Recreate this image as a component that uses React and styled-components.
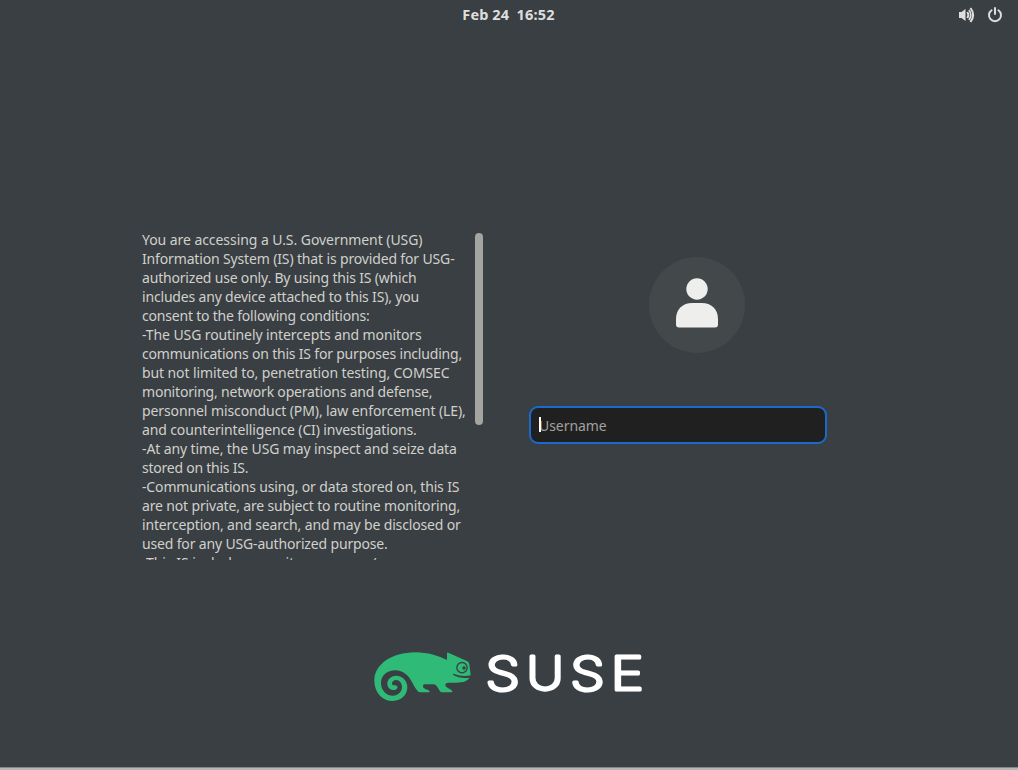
import React from "react";
import styled, { createGlobalStyle } from "styled-components";

const GlobalStyle = createGlobalStyle`
  * { box-sizing: border-box; }
  body {
    margin: 0;
    background: #3a3f43;
    font-family: "Noto Sans", sans-serif;
  }
`;

const Screen = styled.div`
  width: 1018px;
  height: 770px;
  display: flex;
  flex-direction: column;
  overflow: hidden;
  background: #3a3f43;
`;

const TopBar = styled.header`
  display: grid;
  grid-template-columns: 1fr auto 1fr;
  align-items: center;
  height: 30px;
  padding: 0 15px 0 14px;
`;

const Clock = styled.time`
  grid-column: 2;
  padding-bottom: 2px;
  color: #dededc;
  font-size: 14.5px;
  font-weight: 700;
  line-height: 28px;
  letter-spacing: 0.2px;
  word-spacing: -0.4px;
  white-space: pre;
`;

const Tray = styled.div`
  display: flex;
  justify-content: flex-end;
  gap: 12px;
  svg { display: block; }
`;

const Main = styled.main`
  display: flex;
  align-items: flex-start;
  height: 330px;
  margin-top: 200px;
  padding-left: 142px;
`;

const Banner = styled.section`
  display: flex;
  width: 341px;
  height: 330px;
  overflow: hidden;
`;

const Notice = styled.div`
  width: 333px;
  color: #d0d0cc;
  font-size: 14px;
`;

const Line = styled.div`
  height: 19px;
  line-height: 19px;
  white-space: nowrap;
  letter-spacing: ${(p) => p.$track}px;
`;

const ScrollThumb = styled.div`
  width: 8px;
  height: 192px;
  margin-top: 3px;
  border-radius: 4px;
  background: #a4a4a1;
`;

const Login = styled.section`
  display: flex;
  flex-direction: column;
  width: 298px;
  margin-left: 46px;
  padding-top: 27px;
`;

const Avatar = styled.div`
  width: 96px;
  height: 96px;
  margin-left: 120px;
  border-radius: 50%;
  background: #43484b;
  svg { display: block; }
`;

const Entry = styled.div`
  display: flex;
  align-items: center;
  height: 38px;
  margin-top: 53px;
  padding-left: 8px;
  border: 2px solid #1b6acb;
  border-radius: 9px;
  background: #202020;
`;

const Caret = styled.span`
  width: 2px;
  height: 15px;
  margin-right: -2px;
  margin-top: -2px;
  background: #fff;
  z-index: 1;
`;

const Placeholder = styled.span`
  padding-top: 2px;
  color: #a0a09e;
  font-size: 14px;
  line-height: 20px;
  letter-spacing: ${(p) => p.$track}px;
`;

const Footer = styled.footer`
  display: flex;
  margin-top: 80px;
  padding-left: 360px;
  svg { display: block; }
`;

const BottomEdge = styled.div`
  height: 3px;
  margin-top: auto;
  border-top: 1px solid #85888a;
  background: #b7b7b7;
`;

const LINES = [
  ["You are accessing a U.S. Government (USG)", -0.06],
  ["Information System (IS) that is provided for USG-", -0.15],
  ["authorized use only. By using this IS (which", -0.19],
  ["includes any device attached to this IS), you", -0.18],
  ["consent to the following conditions:", -0.2],
  ["-The USG routinely intercepts and monitors", -0.1],
  ["communications on this IS for purposes including,", -0.2],
  ["but not limited to, penetration testing, COMSEC", -0.1],
  ["monitoring, network operations and defense,", -0.2],
  ["personnel misconduct (PM), law enforcement (LE),", -0.1],
  ["and counterintelligence (CI) investigations.", -0.13],
  ["-At any time, the USG may inspect and seize data", -0.12],
  ["stored on this IS.", -0.24],
  ["-Communications using, or data stored on, this IS", -0.15],
  ["are not private, are subject to routine monitoring,", -0.16],
  ["interception, and search, and may be disclosed or", -0.15],
  ["used for any USG-authorized purpose.", -0.16],
  ["-This IS includes security measures (e.g.,", -0.03],
];

const VolumeIcon = () => (
  <svg width="16" height="16" viewBox="0 0 16 16" fill="none" stroke="#dededc">
    <path d="M0 5h2.5L6.500 2v12L2.500 11H0z" fill="#dededc" stroke="none" />
    <path d="M8.300 5Q10.400 8 8.300 11" strokeWidth="1.9" />
    <path d="M10 3Q13.600 8 10 13" strokeWidth="1.7" />
    <path d="M11.500 1Q16.800 8 11.500 15" strokeWidth="2" />
  </svg>
);

const PowerIcon = () => (
  <svg width="16" height="16" viewBox="0 0 16 16" fill="none" stroke="#dededc" strokeWidth="2" strokeLinecap="round">
    <path d="M4.600 3.200A6 6 0 1 0 11.400 3.200M8 1v6" />
  </svg>
);

const Chameleon = () => (
  <svg width="120" height="70" viewBox="0 0 360 210">
    <path
      fill="#30ba78"
      d="M43 122C43 72 96 38 165 37C205 37 235 48 261 60V40Q261 36 265 38L322 64Q327 67 328 73L332 106Q305 112 281 101Q277 101 280 105Q300 117 328 113C322 126 302 128 281 128C266 128 256 127 256 135C256 144 277 148 277 155Q277 157 273 157H246C236 157 234 134 222 133H194Q188 133 189 140C191 148 208 148 209 155Q209 157 205 157H181C160 156 157 91 105 91C82 91 63 107 63 128C63 150 78 167 98 167C115 167 126 155 126 142C126 130 119 120 108 120C102 120 96 124 96 131C97 139 106 133 111 138C115 143 110 150 102 150C92 150 82 143 82 131C82 118 93 107 108 107C125 107 142 120 142 142C142 163 125 183 98 183C70 183 43 160 43 122Z"
    />
    <circle cx="306" cy="83" r="15.5" fill="none" stroke="#3a3f43" strokeWidth="4" />
    <circle cx="312" cy="84" r="5" fill="#3a3f43" />
  </svg>
);

const LETTERS = [
  ["S", 22.600, 1.19],
  ["U", 65, 1.1],
  ["S", 107.500, 1.19],
  ["E", 147.200, 1.2],
];

const Wordmark = () => (
  <svg
    width="180"
    height="70"
    viewBox="0 0 180 70"
    fontFamily="Inter, sans-serif"
    fontSize="46.5"
    fontWeight="200"
    textAnchor="middle"
    fill="#fff"
    stroke="#fff"
    strokeWidth="3.2"
    strokeLinejoin="round"
  >
    {LETTERS.map(([letter, x, stretch]) => (
      <text key={x} transform={`translate(${x} 50.1) scale(${stretch} 1)`}>{letter}</text>
    ))}
  </svg>
);

export default function App() {
  return (
    <>
      <GlobalStyle />
      <Screen>
        <TopBar>
          <Clock>{"Feb 24  16:52"}</Clock>
          <Tray>
            <VolumeIcon />
            <PowerIcon />
          </Tray>
        </TopBar>
        <Main>
          <Banner>
            <Notice>
              {LINES.map(([text, track]) => (
                <Line key={text} $track={track}>{text}</Line>
              ))}
            </Notice>
            <ScrollThumb />
          </Banner>
          <Login>
            <Avatar>
              <svg width="96" height="96" viewBox="0 0 96 96" fill="#eeeeec">
                <circle cx="48" cy="32" r="10.7" />
                <path d="M27 62C27 52 34 46 43 46H53C62 46 69 52 69 62V67.500Q69 70.500 66 70.500H30Q27 70.500 27 67.500Z" />
              </svg>
            </Avatar>
            <Entry>
              <Caret />
              <Placeholder $track={-0.05}>Username</Placeholder>
            </Entry>
          </Login>
        </Main>
        <Footer>
          <Chameleon />
          <Wordmark />
        </Footer>
        <BottomEdge />
      </Screen>
    </>
  );
}
